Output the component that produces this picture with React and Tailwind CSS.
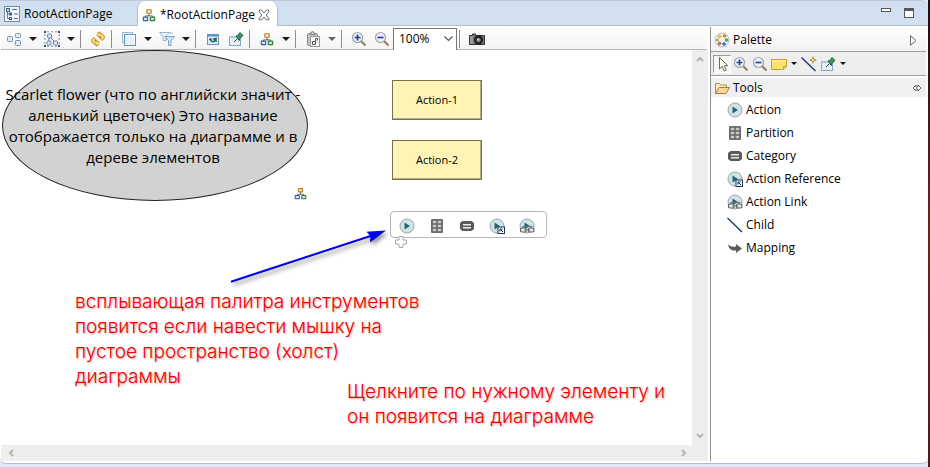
import React from 'react';

function Svg({ children, size = 16 }) {
  return (
    <svg width={size} height={size} viewBox="0 0 16 16" fill="none" aria-hidden="true" className="shrink-0">
      {children}
    </svg>
  );
}

const OutlinePageIcon = () => (
  <Svg>
    <rect x="0.5" y="0.5" width="15" height="15" fill="#f4f8fc" stroke="#7d8894" />
    <rect x="2.5" y="2.5" width="3" height="3" fill="#b9d1ea" stroke="#3c638f" />
    <rect x="5.5" y="7" width="2" height="2" fill="#fff" stroke="#3c638f" />
    <rect x="5.5" y="11.5" width="2" height="2" fill="#fff" stroke="#3c638f" />
    <path d="M3.5 6v6.5h2M3.5 8H5" stroke="#5a7fa8" />
    <path d="M8 3.5h5M10 8h4M10 12.5h4" stroke="#4f6c8c" />
  </Svg>
);

const TreeIcon = ({ size = 16 }) => (
  <Svg size={size}>
    <path d="M8 6v3M4 11V9h8v2" stroke="#50555c" />
    <rect x="5.5" y="2" width="5" height="4" rx="0.5" fill="#fff3c4" stroke="#b67a1b" strokeWidth="1.3" />
    <rect x="1.5" y="10.5" width="5" height="4" rx="0.5" fill="#d7e6fa" stroke="#34609c" strokeWidth="1.3" />
    <rect x="9.5" y="10.5" width="5" height="4" rx="0.5" fill="#cdeccb" stroke="#2f7a3a" strokeWidth="1.3" />
  </Svg>
);

const CloseIcon = () => (
  <Svg size={12}>
    <path d="M1.5 1.5h3.5L8 5.3 11 1.5h3.5v2L11 8l3.5 4.5v2H11L8 10.7 5 14.5H1.5v-2L5 8 1.5 3.500z" fill="#fff" stroke="#666" strokeWidth="1.3" />
  </Svg>
);

const ArrangeIcon = () => (
  <Svg>
    <rect x="1.5" y="5.5" width="5" height="5" rx="1" fill="#e3edf8" stroke="#7390b0" />
    <rect x="9.5" y="2.5" width="5" height="4" rx="1" fill="#e3edf8" stroke="#7390b0" />
    <rect x="9.5" y="9.5" width="5" height="5" rx="1" fill="#e3edf8" stroke="#7390b0" />
  </Svg>
);

const SelectAllIcon = () => (
  <Svg>
    <path d="M3 .8h10M3 15.200h10M.8 3v10M15.200 3v10" stroke="#6d86a3" strokeDasharray="2 2" />
    <path d="M5 5l7 7M5 7v4" stroke="#52708f" />
    <circle cx="5.500" cy="5" r="2.200" fill="#dce9f7" stroke="#6685a8" />
    <rect x="3" y="10" width="4" height="4" rx="1" fill="#dce9f7" stroke="#6685a8" />
    <rect x="9.500" y="10" width="4" height="4" rx="1" fill="#dce9f7" stroke="#6685a8" />
    <path d="M0 0h2v2H0zM14 0h2v2h-2zM0 14h2v2H0zM14 14h2v2h-2z" fill="#33506f" />
  </Svg>
);

const RefreshIcon = () => (
  <Svg>
    <path d="M7 2.500L10 .8v1.700c3 0 4.500 2 4.500 4.500L12.500 9.500 9.500 7H11c0-1.300-.5-2-1-2v1.800L6.500 4.500" fill="#f8d775" stroke="#b98222" strokeWidth="0.900" />
    <path d="M9 13.500L6 15.200v-1.700c-3 0-4.500-2-4.500-4.500L3.500 6.500 6.500 9H5c0 1.300.5 2 1 2V9.200l3.500 2.300" fill="#f8d775" stroke="#b98222" strokeWidth="0.900" />
  </Svg>
);

const LayersIcon = () => (
  <Svg>
    <rect x="1.5" y="1.5" width="10" height="10" fill="#eef5fc" stroke="#9db8d3" />
    <rect x="3.5" y="3.5" width="11" height="11" fill="#e4f0fa" stroke="#6f93b8" />
    <path d="M4.500 4.500h9v9" stroke="#fff" />
  </Svg>
);

const FilterIcon = () => (
  <Svg>
    <path d="M.5 1.5h10L7 5.5v4H4v-4z" fill="#eaf3fb" stroke="#9ab5cf" />
    <path d="M5.500 5.5h10L12 9.5v5H9.5v-5z" fill="#d3e5f4" stroke="#7ea2c2" />
    <path d="M11.500 1v2M14 1.500L13 3" stroke="#9ab5cf" />
  </Svg>
);

const WindowArrowIcon = () => (
  <Svg>
    <rect x="2.5" y="3.5" width="11" height="10" fill="#dceafa" stroke="#7894b3" />
    <path d="M2 3h12v2.500H2z" fill="#5f92c6" />
    <path d="M6 9.500c1.500 2 3 1.500 4.500-1M8 8l3-.5V11" stroke="#1f6f5c" strokeWidth="1.500" />
    <circle cx="5.5" cy="8.5" r="1.200" fill="#1d3d60" />
  </Svg>
);

const PinIcon = () => (
  <Svg>
    <rect x="1.5" y="5.5" width="11" height="9" fill="#e6f1fb" stroke="#8ba5bf" />
    <path d="M1 5h7v2H1z" fill="#a5c6e4" />
    <path d="M6 11l3.5-3.5" stroke="#333" />
    <path d="M8 5l2-.5L12 1.5 15 4.5 12 7l-.8 2.500z" fill="#3f9358" stroke="#1f5f38" />
  </Svg>
);

const PasteIcon = () => (
  <Svg>
    <rect x="2.5" y="2.5" width="10" height="12" rx="1" fill="#c2c2c2" stroke="#8c8c8c" />
    <path d="M5 3.500V2h1.500V.8h2V2H10v1.500z" fill="#e8e8e8" stroke="#808080" />
    <rect x="5.5" y="5.5" width="9" height="10" fill="#f8f8f8" stroke="#9a9a9a" />
    <path d="M7.500 10.500h3v3h-3zM10.500 10.500v-3h2v2" stroke="#555" />
  </Svg>
);

const ZoomIcon = ({ plus }) => (
  <Svg>
    <path d="M10 10l4.5 4.5" stroke="#8f7d5f" strokeWidth="2" />
    <circle cx="6.5" cy="6.5" r="5" fill="#eef3fb" stroke="#a4a4a4" strokeWidth="1.2" />
    <path d={plus ? 'M3.5 6.5h6M6.5 3.5v6' : 'M3.5 6.5h6'} stroke="#24419c" strokeWidth="1.7" />
  </Svg>
);

const CameraIcon = () => (
  <Svg>
    <path d="M.5 4.5h3V3h3v1.5h9v9H.5z" fill="#77786f" stroke="#333" />
    <path d="M1 5h3v8H1z" fill="#9b9d94" />
    <circle cx="9.5" cy="9" r="4" fill="#2a2f34" stroke="#111" />
    <circle cx="9.5" cy="9" r="2" fill="#7b93a5" />
    <circle cx="9" cy="8.5" r="0.8" fill="#e8f2f8" />
  </Svg>
);

const PaletteIcon = () => (
  <Svg>
    <circle cx="8" cy="8" r="7" fill="#f3f5f8" stroke="#b6bec8" />
    <circle cx="5.5" cy="4.5" r="1.300" fill="#f9d54a" stroke="#d29a12" />
    <circle cx="10.500" cy="4" r="1.300" fill="#f2a553" stroke="#cf6a20" />
    <circle cx="12.500" cy="8" r="1.300" fill="#8bc57b" stroke="#318a36" />
    <circle cx="10" cy="12" r="1.300" fill="#6f9be0" stroke="#2759ad" />
    <circle cx="5.500" cy="11.500" r="1.300" fill="#ec7a70" stroke="#c2352b" />
    <circle cx="3.500" cy="8" r="1" fill="#c8e08a" stroke="#7fa52c" />
  </Svg>
);

const CursorIcon = () => (
  <Svg>
    <path d="M5.5 1.500v11.500l2.800-2.500 2 4.500 2-1-2-4.300h3.500z" fill="#fffef2" stroke="#706a58" />
  </Svg>
);

const NoteIcon = () => (
  <Svg>
    <path d="M.5 3.5h15v7l-3 3H.5z" fill="#fbe36a" stroke="#c9a227" />
    <path d="M15.5 10.5h-3v3z" fill="#fff6c2" stroke="#c9a227" />
    <path d="M1.500 5h13" stroke="#fff3a8" />
  </Svg>
);

const ConnectIcon = () => (
  <Svg>
    <path d="M.5 1.5L14.500 15" stroke="#1a2f7a" strokeWidth="1.300" />
    <path d="M12 .8l.8 2.400 2.400.8-2.400.8-.8 2.400-.8-2.400L8.800 4l2.400-.8z" fill="#fff3c0" stroke="#b5872b" strokeWidth="0.900" />
  </Svg>
);

const FolderIcon = () => (
  <Svg>
    <path d="M1.5 13.5v-10h4l1 1.5h6v2" fill="#fdebbd" stroke="#b88a40" />
    <path d="M1.5 13.5L5 7.5h10.500l-3.500 6z" fill="#f9d99a" stroke="#b57d2e" />
  </Svg>
);

const PlayDisc = () => (
  <>
    <circle cx="8" cy="8" r="7" fill="#d3e2e4" stroke="#98a6aa" />
    <path d="M5.500 4.500L11 8l-5.500 3.500z" fill="#1f6a70" />
  </>
);

const ActionIcon = () => <Svg><PlayDisc /></Svg>;

const PartitionIcon = () => (
  <Svg>
    <rect x="2" y="1" width="12" height="14" rx="1" fill="#6c6c6c" />
    <path d="M4 3h3v2H4zM9 3h3v2H9zM4 7h3v2H4zM9 7h3v2H9zM4 11h3v2H4zM9 11h3v2H9z" fill="#d8d8d8" stroke="#b0b0b0" strokeWidth="0.500" />
  </Svg>
);

const CategoryIcon = () => (
  <Svg>
    <path d="M3.500 3h9L15 5v6l-2.500 2h-9L1 11V5z" fill="#5b5b5b" />
    <path d="M4 6h8v1.500H4zM4 9h8v1.500H4z" fill="#ececec" />
  </Svg>
);

const ReferenceIcon = () => (
  <Svg>
    <PlayDisc />
    <rect x="9" y="9" width="6.500" height="6.500" fill="#fff" stroke="#143a5c" />
    <path d="M14 14l-2.500-2.500M11 13.500V11h2.500" stroke="#0d2238" />
  </Svg>
);

const LinkIcon = () => (
  <Svg>
    <PlayDisc />
    <rect x="1.500" y="10" width="5.500" height="4" rx="1.500" fill="#e6e6e6" stroke="#5c6164" strokeWidth="1.200" />
    <rect x="9.500" y="10" width="5.500" height="4" rx="1.500" fill="#e6e6e6" stroke="#5c6164" strokeWidth="1.200" />
    <path d="M4 10V8.500h8.500V10M5.500 12h5.500" stroke="#6b7174" strokeWidth="1.200" />
  </Svg>
);

const ChildIcon = () => <Svg><path d="M.5 1L15 15" stroke="#1b2d6e" strokeWidth="1.300" /></Svg>;

const MappingIcon = () => (
  <Svg>
    <path d="M1 4c1.500 2.500 4 3 8 2.500V4l6 4.500L9 13v-2.500C5 11 1.500 9 1 4z" fill="#5c5c5c" />
  </Svg>
);

function Caret({ muted }) {
  return (
    <svg width="8" height="4" viewBox="0 0 8 4" aria-hidden="true">
      <path d="M0 0h8L4 4z" fill={muted ? '#666' : '#1a1a1a'} />
    </svg>
  );
}

function SmallCaret() {
  return (
    <svg width="6" height="3" viewBox="0 0 8 4" aria-hidden="true">
      <path d="M0 0h8L4 4z" fill="#111" />
    </svg>
  );
}

function ToolButton({ label, children }) {
  return (
    <button type="button" aria-label={label} className="flex h-5 w-[23px] shrink-0 items-center justify-center">
      {children}
    </button>
  );
}

function DropButton({ label, muted, children }) {
  return (
    <span className="flex shrink-0 items-center">
      <ToolButton label={label}>{children}</ToolButton>
      <button type="button" aria-label={`${label} menu`} className="flex h-5 w-[15px] items-center justify-center">
        <Caret muted={muted} />
      </button>
    </span>
  );
}

function Separator() {
  return (
    <span className="w-2 shrink-0 pl-0.5">
      <span className="block h-[18px] w-px bg-[#8e8e8e]" />
    </span>
  );
}

function Tabs() {
  return (
    <header className="flex h-[26px] items-stretch rounded-tr-lg border-t border-b border-t-[#bccad8] border-b-[#b5bec9] bg-[#d1e0f0] text-xs">
      <nav className="flex flex-1" aria-label="Editors">
        <button type="button" className="flex w-[137px] items-center gap-1 pl-1 pt-0.5">
          <OutlinePageIcon />
          <span>RootActionPage</span>
        </button>
        <div className="-mb-px flex items-center rounded-t-lg border-x border-[#b5bec9] bg-white pl-1 pr-[7px] pt-0.5">
          <button type="button" className="flex items-center gap-1">
            <TreeIcon size={14} />
            <span className="w-[98px] text-left">*RootActionPage</span>
          </button>
          <button type="button" aria-label="Close"><CloseIcon /></button>
        </div>
      </nav>
      <div className="flex items-start gap-[13px] pr-3.5 pt-[7px]">
        <button type="button" aria-label="Minimize" className="h-1 w-2.5 border border-[#555] bg-white" />
        <button type="button" aria-label="Maximize" className="h-2.5 w-2.5 border border-t-[3px] border-[#555] bg-white" />
      </div>
    </header>
  );
}

function Toolbar() {
  return (
    <div className="mr-px flex h-6 items-center border-b border-[#b8b8b8] bg-gradient-to-b from-white to-[#f4f4f4] pl-px pt-0.5" role="toolbar">
      <DropButton label="Arrange"><ArrangeIcon /></DropButton>
      <DropButton label="Select"><SelectAllIcon /></DropButton>
      <Separator />
      <ToolButton label="Refresh"><RefreshIcon /></ToolButton>
      <Separator />
      <DropButton label="Layers"><LayersIcon /></DropButton>
      <DropButton label="Filters"><FilterIcon /></DropButton>
      <Separator />
      <ToolButton label="Show element"><WindowArrowIcon /></ToolButton>
      <ToolButton label="Pin element"><PinIcon /></ToolButton>
      <Separator />
      <DropButton label="Layout"><TreeIcon size={14} /></DropButton>
      <Separator />
      <DropButton label="Paste" muted><PasteIcon /></DropButton>
      <Separator />
      <ToolButton label="Zoom in"><ZoomIcon plus /></ToolButton>
      <ToolButton label="Zoom out"><ZoomIcon /></ToolButton>
      <span className="relative h-[22px] w-16 shrink-0">
        <select aria-label="Zoom" className="block h-[22px] w-full appearance-none border border-b-0 border-[#777] bg-white pl-[5px] text-xs">
          <option>100%</option>
        </select>
        <svg width="9" height="6" viewBox="0 0 9 6" fill="none" className="pointer-events-none absolute right-1 top-2" aria-hidden="true">
          <path d="M.5.5l4 4 4-4" stroke="#555" strokeWidth="1.200" />
        </svg>
      </span>
      <Separator />
      <ToolButton label="Snapshot"><CameraIcon /></ToolButton>
    </div>
  );
}

function Chevron({ turn }) {
  return (
    <svg width="8" height="8" viewBox="0 0 8 8" fill="none" className={turn} aria-hidden="true">
      <path d="M1 6l3-3 3 3" stroke="#b4b4b4" strokeWidth="2" />
    </svg>
  );
}

const tools = [
  ['Action', ActionIcon],
  ['Partition', PartitionIcon],
  ['Category', CategoryIcon],
  ['Action Reference', ReferenceIcon],
  ['Action Link', LinkIcon],
  ['Child', ChildIcon],
  ['Mapping', MappingIcon],
];

function Node({ place, children }) {
  return (
    <div className={`absolute flex h-10 w-[90px] items-center justify-center border border-[#77704d] bg-[#fff4b5] text-[11px] shadow-[inset_-1px_-1px_0_#b5ad80] ${place}`}>
      {children}
    </div>
  );
}

function Annotation({ place, children }) {
  return (
    <p className={`absolute font-[Inter,sans-serif] text-[19px] leading-[25px] font-light whitespace-nowrap text-[#f00000] [text-shadow:1px_1px_2px_rgba(120,0,0,0.35)] ${place}`}>
      {children}
    </p>
  );
}

function Canvas() {
  return (
    <div className="relative min-w-0 flex-1 overflow-hidden bg-white">
      <div className="absolute left-0 top-0 flex h-[151px] w-[306px] items-center justify-center rounded-[50%] border border-[#222] bg-[#d2d2d2] pr-1 text-center text-[15px] leading-[21px] whitespace-nowrap">
        <p>
          Scarlet flower (что по английски значит -<br />
          аленький цветочек) Это название<br />
          отображается только на диаграмме и в<br />
          дереве элементов
        </p>
      </div>
      <div className="absolute left-[292px] top-[137px]"><TreeIcon size={13} /></div>
      <Node place="left-[390px] top-[30px]">Action-1</Node>
      <Node place="left-[390px] top-[90px]">Action-2</Node>

      <div className="absolute left-[388px] top-[161px] flex h-[27px] w-[157px] items-center gap-3.5 rounded border border-[#b4b9b6] bg-white pl-2 pt-0.5">
        {tools.slice(0, 5).map(([name, Icon]) => (
          <button key={name} type="button" aria-label={name}><Icon /></button>
        ))}
      </div>
      <svg width="12" height="12" viewBox="0 0 12 12" className="absolute left-[393px] top-[186px]" aria-hidden="true">
        <path d="M4 .5h4V4h3.500v4H8v3.500H4V8H.5V4H4z" fill="#fff" stroke="#a9a9a9" />
      </svg>

      <svg width="170" height="64" viewBox="0 0 170 64" className="absolute left-[224px] top-[175px] drop-shadow-[2px_3px_2px_rgba(0,0,0,0.45)]" aria-hidden="true">
        <path d="M5 56.700L146 10.500" stroke="#0000ee" strokeWidth="2" />
        <path d="M160 5.500L140.500 6.700l4 4.300-.5 6.500z" fill="#0000ee" />
      </svg>

      <Annotation place="left-[73px] top-[239px]">
        всплывающая палитра инструментов<br />
        появится если навести мышку на<br />
        пустое пространство (холст)<br />
        диаграммы
      </Annotation>
      <Annotation place="left-[345px] top-[329px]">
        Щелкните по нужному элементу и<br />
        он появится на диаграмме
      </Annotation>
    </div>
  );
}

function Palette() {
  return (
    <aside className="mt-px mb-0.5 w-[216px] shrink-0 border-l border-[#8f8f8f] bg-white text-xs">
      <div className="flex h-[25px] items-center gap-[3px] border-b border-[#a0a0a0] bg-gradient-to-b from-white to-[#f1f1f1] pl-[3px] pr-[9px] pt-0.5">
        <PaletteIcon />
        <h2 className="flex-1">Palette</h2>
        <button type="button" aria-label="Collapse palette">
          <svg width="7" height="11" viewBox="0 0 7 11" aria-hidden="true">
            <path d="M.5.8v9.400L6 5.500z" fill="#fff" stroke="#666" />
          </svg>
        </button>
      </div>
      <div className="flex h-6 items-center border-b border-[#a0a0a0] bg-[#eee] pl-0.5" role="toolbar" aria-label="Palette tools">
        <button type="button" aria-label="Select" className="flex h-[18px] w-[18px] items-center justify-center border border-[#999] border-r-white border-b-white bg-[#f6f6f6]"><CursorIcon /></button>
        <button type="button" aria-label="Zoom in" className="flex w-[19px] justify-center"><ZoomIcon plus /></button>
        <button type="button" aria-label="Zoom out" className="flex w-[19px] justify-center"><ZoomIcon /></button>
        <button type="button" aria-label="Note" className="flex w-8 items-center gap-1 pl-0.5"><NoteIcon /><SmallCaret /></button>
        <button type="button" aria-label="Connection" className="flex w-[19px]"><ConnectIcon /></button>
        <button type="button" aria-label="Pin" className="flex w-8 items-center gap-1"><PinIcon /><SmallCaret /></button>
      </div>
      <div className="mt-0.5 flex h-[19px] items-center gap-[3px] bg-[#f0f0f0] pl-[3px] pr-1">
        <FolderIcon />
        <h3 className="flex-1">Tools</h3>
        <svg width="10" height="8" viewBox="0 0 10 8" fill="none" aria-hidden="true">
          <path d="M4 1L1 4l3 3V5h2v2l3-3-3-3v2H4z" fill="#fff" stroke="#666" />
        </svg>
      </div>
      <ul className="pt-px">
        {tools.map(([name, Icon]) => (
          <li key={name}>
            <button type="button" className="flex h-[23px] w-full items-center gap-[3px] pl-4 text-left">
              <Icon />
              {name}
            </button>
          </li>
        ))}
      </ul>
    </aside>
  );
}

export default function App() {
  return (
    <div className="flex min-h-screen bg-[#e1e8f5] font-['Open_Sans','Noto_Sans',sans-serif] text-black">
      <div className="flex min-w-0 flex-1 flex-col">
        <Tabs />
        <div className="flex flex-1 rounded-b-md border-b border-[#b5bcc9] bg-white pl-px">
          <div className="mb-0.5 flex min-w-0 flex-1 flex-col">
            <Toolbar />
            <div className="flex flex-1 pl-px">
              <Canvas />
              <div className="flex w-4 shrink-0 flex-col items-center justify-between bg-[#eee] py-[5px]">
                <Chevron turn="" />
                <Chevron turn="rotate-180" />
              </div>
            </div>
            <div className="flex h-4 items-center justify-between bg-[#eee] pl-1.5 pr-5">
              <Chevron turn="-rotate-90" />
              <Chevron turn="rotate-90" />
            </div>
          </div>
          <div className="w-0.5 shrink-0" />
          <Palette />
          <div className="w-0.5 shrink-0" />
        </div>
        <div className="h-[3px]" />
      </div>
      <div className="w-0.5 shrink-0 bg-gradient-to-b from-[#1c0d10] via-[#6b2422] to-[#4a1c20]" />
    </div>
  );
}
